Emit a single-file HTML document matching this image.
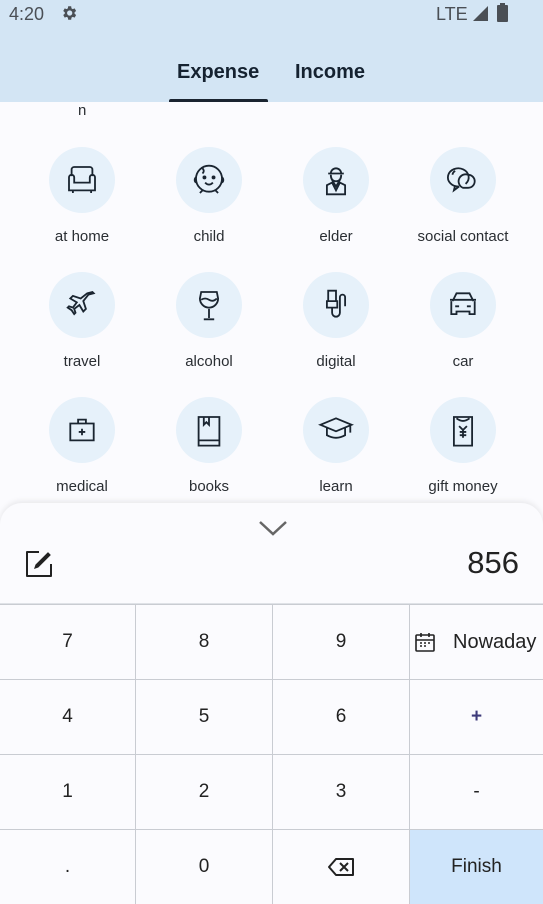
<!DOCTYPE html>
<html><head><style>
*{margin:0;padding:0;box-sizing:border-box}
body{width:543px;height:904px;overflow:hidden;background:#fbfbfe;font-family:"Liberation Sans",sans-serif;position:relative;color:#1b1f24}
.hdr{position:absolute;left:0;top:0;width:543px;height:102px;background:#d3e5f4}
.st{position:absolute;top:4px;font-size:18px;color:#4a4f55}
.tab{position:absolute;top:61px;font-size:20px;font-weight:bold;color:#152230}
.ind{position:absolute;left:169px;top:99px;width:99px;height:3px;background:#1a2430;border-radius:2px 2px 0 0}
.it{position:absolute;width:120px;text-align:center}
.c{width:66px;height:66px;border-radius:50%;background:#e6f1fa;margin:0 auto;display:flex;align-items:center;justify-content:center}
.c svg{transform:scale(1.3)}
.lb{margin-top:15px;font-size:15px;color:#2a2e33}
.sheet{position:absolute;left:0;top:503px;width:543px;height:401px;background:#fbfbfe;border-radius:22px 22px 0 0;box-shadow:0 -2px 6px rgba(0,0,0,.08)}
.k{position:absolute;display:flex;align-items:center;justify-content:center;font-size:19px;color:#222;border-right:1px solid #c9ccd2;border-top:1px solid #c9ccd2;overflow:hidden;white-space:nowrap}
</style></head><body>
<div class="hdr"></div>
<div class="st" style="left:9px">4:20</div>
<svg style="position:absolute;left:60px;top:4px" width="18" height="18" viewBox="0 0 24 24"><path fill="#4a4f55" d="M19.4 13a7.5 7.5 0 0 0 0-2l2.1-1.6-2-3.5-2.5 1a7 7 0 0 0-1.7-1L14.9 3h-4l-.4 2.9a7 7 0 0 0-1.7 1l-2.5-1-2 3.5L6.4 11a7.5 7.5 0 0 0 0 2l-2.1 1.6 2 3.5 2.5-1a7 7 0 0 0 1.7 1l.4 2.9h4l.4-2.9a7 7 0 0 0 1.7-1l2.5 1 2-3.5zM12.9 15.5a3.5 3.5 0 1 1 0-7 3.5 3.5 0 0 1 0 7z"/></svg>
<div class="st" style="left:436px">LTE</div>
<svg style="position:absolute;left:472px;top:5px" width="17" height="17"><path d="M16 1V16H1z" fill="#4a4f55"/></svg>
<div style="position:absolute;left:497px;top:5px;width:11px;height:17px;background:#4a4f55;border-radius:1px"></div>
<div style="position:absolute;left:500px;top:3px;width:5px;height:3px;background:#4a4f55"></div>
<div class="tab" style="left:177px">Expense</div>
<div class="tab" style="left:295px">Income</div>
<div class="ind"></div>
<div style="position:absolute;left:78px;top:102px;font-size:15px;color:#2a2e33">n</div>

<div class="it" style="left:22px;top:147px"><div class="c"><svg width="30" height="30" viewBox="0 0 30 30" fill="none" stroke="#1a2530" stroke-width="1.4"><path d="M7 12V7a2 2 0 0 1 2-2h12a2 2 0 0 1 2 2v5M5 13a2 2 0 0 1 4 0v4h12v-4a2 2 0 0 1 4 0v10H5zM8 23v2M22 23v2"/></svg></div><div class="lb">at home</div></div>
<div class="it" style="left:149px;top:147px"><div class="c"><svg width="34" height="34" viewBox="0 0 34 34" fill="none" stroke="#1a2530" stroke-width="1.4"><circle cx="17" cy="16" r="10"/><path d="M7 15a2.5 2.5 0 0 0 0 4M27 15a2.5 2.5 0 0 1 0 4M14 19q3 3 6 0M12 25l-2 2M22 25l2 2M12 8q2 2 0 4"/><circle cx="13.5" cy="15" r=".8" fill="#1a2530"/><circle cx="20.5" cy="15" r=".8" fill="#1a2530"/></svg></div><div class="lb">child</div></div>
<div class="it" style="left:276px;top:147px"><div class="c"><svg width="30" height="30" viewBox="0 0 30 30" fill="none" stroke="#1a2530" stroke-width="1.4"><path d="M9 10h12M11 10a4 4 0 0 1 8 0M11 11q0 5 4 5t4-5M8 26V19l4-2 3 6 3-6 4 2v7z"/><path d="M12 15l3 5 3-5"/></svg></div><div class="lb">elder</div></div>
<div class="it" style="left:403px;top:147px"><div class="c"><svg width="34" height="34" viewBox="0 0 34 34" fill="none" stroke="#1a2530" stroke-width="1.4"><path d="M14 22a8 7 0 1 1 5-2M11 21l-1 4 4-3"/><path d="M21 13a5 5 0 1 1 0 10h-4a5 5 0 0 1 4-10zM11 10q-2 1-2 3"/></svg></div><div class="lb">social contact</div></div>

<div class="it" style="left:22px;top:272px"><div class="c"><svg width="30" height="30" viewBox="0 0 30 30" fill="none" stroke="#1a2530" stroke-width="1.4"><path d="M24 6l-1-1-4 1-5 4-6-2-2 2 5 3-3 4-3-1-1 1 3 2 2 3 1-1-1-3 4-3 3 5 2-2-2-6 4-5z"/></svg></div><div class="lb">travel</div></div>
<div class="it" style="left:149px;top:272px"><div class="c"><svg width="30" height="30" viewBox="0 0 30 30" fill="none" stroke="#1a2530" stroke-width="1.4"><path d="M9 5h12l1 5a7 7 0 0 1-14 0zM9 11q3-2 6 0t6-1M15 18v7M11 26h8"/></svg></div><div class="lb">alcohol</div></div>
<div class="it" style="left:276px;top:272px"><div class="c"><svg width="30" height="30" viewBox="0 0 30 30" fill="none" stroke="#1a2530" stroke-width="1.4"><path d="M9 4h6v8H9zM8 12h8v5H8zM12 17v4a3 3 0 0 0 6 0V9a2 2 0 0 1 4 0v7"/></svg></div><div class="lb">digital</div></div>
<div class="it" style="left:403px;top:272px"><div class="c"><svg width="34" height="34" viewBox="0 0 34 34" fill="none" stroke="#1a2530" stroke-width="1.4"><path d="M9 14l3-6h10l3 6M7 13h20M8 14v10h4v-2h10v2h4V14M11 18h3M20 18h3"/></svg></div><div class="lb">car</div></div>

<div class="it" style="left:22px;top:397px"><div class="c"><svg width="30" height="30" viewBox="0 0 30 30" fill="none" stroke="#1a2530" stroke-width="1.4"><path d="M6 10h18v13H6zM12 10V7h6v3M15 14v5M12.5 16.5h5"/></svg></div><div class="lb">medical</div></div>
<div class="it" style="left:149px;top:397px"><div class="c"><svg width="30" height="30" viewBox="0 0 30 30" fill="none" stroke="#1a2530" stroke-width="1.4"><path d="M7 5h16v22H7zM7 23h16M11 5v6l2-2 2 2V5"/></svg></div><div class="lb">books</div></div>
<div class="it" style="left:276px;top:397px"><div class="c"><svg width="34" height="34" viewBox="0 0 34 34" fill="none" stroke="#1a2530" stroke-width="1.4"><path d="M5 13l12-5 12 5-12 5zM10 15v6q7 4 14 0v-6M28 14v5"/></svg></div><div class="lb">learn</div></div>
<div class="it" style="left:403px;top:397px"><div class="c"><svg width="30" height="30" viewBox="0 0 30 30" fill="none" stroke="#1a2530" stroke-width="1.4"><path d="M8 5h14v22H8zM10 6q5 4 10 0M12 12l3 3 3-3M15 15v6M12.5 16.5h5M12.5 19h5"/></svg></div><div class="lb">gift money</div></div>

<div class="sheet">
<svg style="position:absolute;left:258px;top:16px" width="30" height="18"><path d="M2 3l13 12 13-12" fill="none" stroke="#666" stroke-width="2.5"/></svg>
<svg style="position:absolute;left:24px;top:46px" width="30" height="30" viewBox="0 0 30 30" fill="none" stroke="#222" stroke-width="2"><path d="M15 3H3v24h24V15" stroke-linejoin="round"/><path d="M11 19l1-3L24 4l2 2-12 12z" fill="#222" stroke-width="1.2"/></svg>
<div style="position:absolute;right:24px;top:42px;font-size:31px;color:#222">856</div>
</div>
<div style="position:absolute;left:0;top:603px;width:543px;height:2px;background:#dfe2e7"></div>

<div class="k" style="left:0;top:604px;width:136px;height:75px">7</div>
<div class="k" style="left:136px;top:604px;width:137px;height:75px">8</div>
<div class="k" style="left:273px;top:604px;width:137px;height:75px">9</div>
<div class="k" style="left:410px;top:604px;width:133px;height:75px;border-right:0;justify-content:flex-start;padding-left:4px"><svg width="22" height="22" viewBox="0 0 22 22" fill="none" stroke="#222" stroke-width="1.6"><rect x="2" y="4" width="18" height="16" rx="1"/><path d="M2 9h18M7 2v4M15 2v4M6 12h2M10 12h2M14 12h2M6 15h2M10 15h2"/></svg><span style="margin-left:17px;font-size:20px">Nowaday</span></div>
<div class="k" style="left:0;top:679px;width:136px;height:75px">4</div>
<div class="k" style="left:136px;top:679px;width:137px;height:75px">5</div>
<div class="k" style="left:273px;top:679px;width:137px;height:75px">6</div>
<div class="k" style="left:410px;top:679px;width:133px;height:75px;border-right:0;color:#3d3a7a;font-weight:bold">+</div>
<div class="k" style="left:0;top:754px;width:136px;height:75px">1</div>
<div class="k" style="left:136px;top:754px;width:137px;height:75px">2</div>
<div class="k" style="left:273px;top:754px;width:137px;height:75px">3</div>
<div class="k" style="left:410px;top:754px;width:133px;height:75px;border-right:0">-</div>
<div class="k" style="left:0;top:829px;width:136px;height:75px">.</div>
<div class="k" style="left:136px;top:829px;width:137px;height:75px">0</div>
<div class="k" style="left:273px;top:829px;width:137px;height:75px"><svg width="28" height="20" viewBox="0 0 28 20" fill="none" stroke="#222" stroke-width="2"><path d="M9 2h17v16H9L2 10z" stroke-linejoin="round"/><path d="M13 6l8 8M21 6l-8 8"/></svg></div>
<div class="k" style="left:410px;top:829px;width:133px;height:75px;border-right:0;background:#cfe5fb">Finish</div>
</body></html>
